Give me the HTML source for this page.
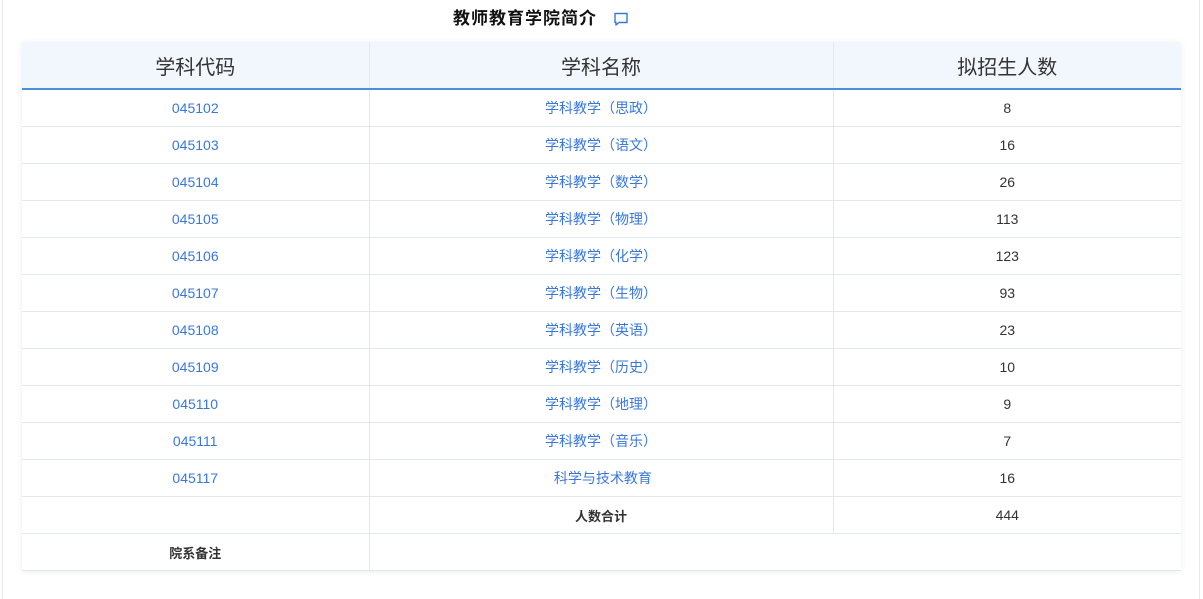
<!DOCTYPE html>
<html><head><meta charset="utf-8"><style>
html,body{margin:0;padding:0;background:#fff;width:1203px;height:586px;overflow:hidden;font-family:"Liberation Sans","Noto Sans CJK SC",sans-serif;}
.frame{position:absolute;left:2px;top:-1px;width:1196px;height:600px;border-left:1px solid #e8e8e8;border-right:1px solid #e8e8e8;}
.title{position:absolute;top:8px;left:453px;font-size:17px;letter-spacing:1px;font-weight:bold;color:#111;line-height:22px;white-space:nowrap;}
.icon{position:absolute;left:613px;top:11px;}
table{position:absolute;left:22px;top:42px;width:1159px;border-collapse:collapse;box-shadow:0 1px 6px rgba(0,0,0,0.08);table-layout:fixed;}
th{height:46px;padding:0;background:#f2f6fd;font-weight:normal;font-size:20px;color:#333;border-right:1px solid #e3e8ef;border-bottom:2px solid #4a8fd8;}
td{height:36px;padding:0;text-align:center;font-size:14px;color:#333;border-right:1px solid #e3e8ef;border-bottom:1px solid #e3e8ef;}
th:last-child,td:last-child{border-right:none;}
td.b{color:#3a78d8;}
td.k{font-weight:bold;font-size:13px;}
</style></head><body>
<div class="frame"></div>
<div class="title">教师教育学院简介</div>
<svg class="icon" width="16" height="16" viewBox="0 0 16 16"><path d="M2 2.5h12v9H6l-3 2.5v-2.5H2z" fill="none" stroke="#3a78d8" stroke-width="1.4" stroke-linejoin="round"/></svg>
<table>
<colgroup><col style="width:347px"><col style="width:464px"><col style="width:348px"></colgroup>
<tr><th>学科代码</th><th>学科名称</th><th>拟招生人数</th></tr>
<tr><td class="b">045102</td><td class="b">学科教学（思政）</td><td>8</td></tr>
<tr><td class="b">045103</td><td class="b">学科教学（语文）</td><td>16</td></tr>
<tr><td class="b">045104</td><td class="b">学科教学（数学）</td><td>26</td></tr>
<tr><td class="b">045105</td><td class="b">学科教学（物理）</td><td>113</td></tr>
<tr><td class="b">045106</td><td class="b">学科教学（化学）</td><td>123</td></tr>
<tr><td class="b">045107</td><td class="b">学科教学（生物）</td><td>93</td></tr>
<tr><td class="b">045108</td><td class="b">学科教学（英语）</td><td>23</td></tr>
<tr><td class="b">045109</td><td class="b">学科教学（历史）</td><td>10</td></tr>
<tr><td class="b">045110</td><td class="b">学科教学（地理）</td><td>9</td></tr>
<tr><td class="b">045111</td><td class="b">学科教学（音乐）</td><td>7</td></tr>
<tr><td class="b">045117</td><td class="b">&nbsp;科学与技术教育</td><td>16</td></tr>
<tr><td></td><td class="k">人数合计</td><td>444</td></tr>
<tr><td class="k">院系备注</td><td colspan="2"></td></tr>
</table>
</body></html>
